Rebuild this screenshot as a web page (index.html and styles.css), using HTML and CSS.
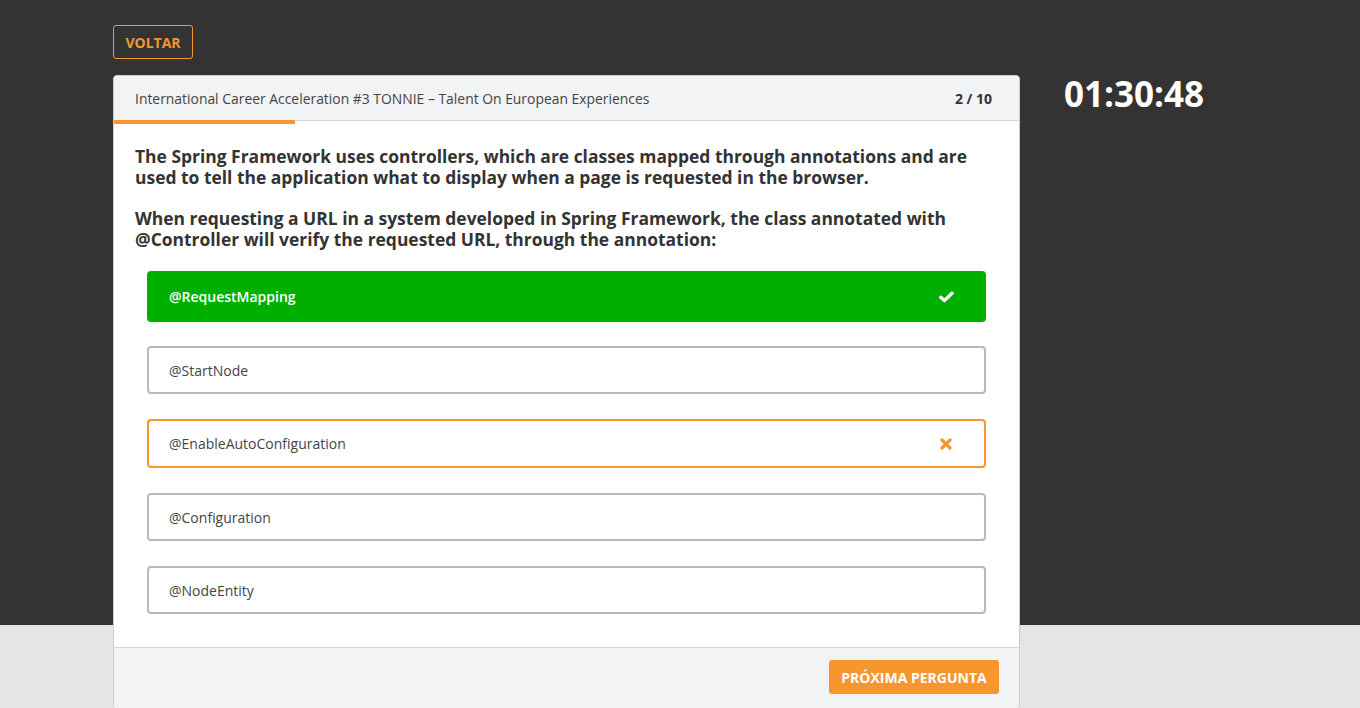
FILE: index.html
```html
<!DOCTYPE html>
<html lang="pt">
<head>
<meta charset="utf-8">
<title>Quiz</title>
<link rel="stylesheet" href="styles.css">
</head>
<body>
<div class="page">
  <div class="topbar">
    <button class="btn-back">VOLTAR</button>
  </div>
  <div class="row">
    <div class="card">
      <div class="card-header">
        <span class="title">International Career Acceleration #3 TONNIE – Talent On European Experiences</span>
        <span class="count">2 / 10</span>
      </div>
      <div class="progress"><div class="progress-fill" style="width:20%"></div></div>
      <div class="card-body">
        <p class="question">The Spring Framework uses controllers, which are classes mapped through annotations and are used to tell the application what to display when a page is requested in the browser.</p>
        <p class="question">When requesting a URL in a system developed in Spring Framework, the class annotated with @Controller will verify the requested URL, through the annotation:</p>
        <div class="options">
          <div class="option correct"><span>@RequestMapping</span>
            <svg class="icon" width="15" height="12" viewBox="0 0 15 12"><path d="M1.8 6.3 L5.4 9.6 L13 2.2" fill="none" stroke="#fff" stroke-width="3.4" stroke-linecap="round" stroke-linejoin="round"/></svg>
          </div>
          <div class="option"><span>@StartNode</span></div>
          <div class="option wrong"><span>@EnableAutoConfiguration</span>
            <svg class="icon" width="12" height="12" viewBox="0 0 12 12"><path d="M2 2 L10 10 M10 2 L2 10" fill="none" stroke="#f7962f" stroke-width="3.2" stroke-linecap="round"/></svg>
          </div>
          <div class="option"><span>@Configuration</span></div>
          <div class="option"><span>@NodeEntity</span></div>
        </div>
      </div>
      <div class="card-footer">
        <button class="btn-next">PRÓXIMA PERGUNTA</button>
      </div>
    </div>
    <div class="timer">01:30:48</div>
  </div>
</div>
</body>
</html>
```
FILE: styles.css
```css
* { box-sizing: border-box; }
html, body { margin: 0; padding: 0; }
body {
  font-family: "Open Sans", "Liberation Sans", sans-serif;
  background: linear-gradient(#333333 0, #333333 625px, #e4e5e6 625px);
  min-height: 708px;
  color: #333;
}
.page {
  padding: 25px 0 0 113px;
}
.topbar {
  height: 50px;
}
.btn-back {
  font-family: inherit;
  font-weight: 700;
  font-size: 14px;
  color: #f7962f;
  background: transparent;
  border: 1px solid #f7962f;
  border-radius: 3px;
  width: 80px;
  height: 34px;
  padding: 0;
  cursor: pointer;
}
.row {
  display: flex;
  align-items: flex-start;
  gap: 44px;
}
.card {
  width: 907px;
  background: #fff;
  border: 1px solid #c9cbce;
  border-radius: 4px;
  overflow: hidden;
}
.card-header {
  height: 45px;
  background: #f2f3f5;
  border-bottom: 1px solid #d4d6d9;
  display: flex;
  align-items: center;
  justify-content: space-between;
  padding: 0 27px 0 21px;
  font-size: 14px;
  color: #444;
}
.title { font-size: 13.9px; }
.count {
  font-weight: 700;
  color: #333;
}
.progress {
  height: 4px;
  margin-top: -1px;
}
.progress-fill {
  height: 4px;
  background: #f7962f;
}
.card-body {
  padding: 22px 33px 33px 21px;
}
.question {
  margin: 0 0 20px;
  font-size: 17.45px;
  font-weight: 700;
  line-height: 21px;
  color: #333;
}
.question + .question { margin-bottom: 21px; }
.options {
  padding-left: 12px;
  display: flex;
  flex-direction: column;
  gap: 25px;
}
.option {
  height: 48px;
  border: 2px solid #b6babe;
  border-radius: 4px;
  display: flex;
  align-items: center;
  justify-content: space-between;
  padding: 0 32px 0 20px;
  font-size: 14px;
  color: #444;
}
.option.correct {
  height: 51px;
  background: #00b000;
  border-color: #00b000;
  color: #fff;
  font-weight: 600;
  margin-bottom: -1px;
  padding-right: 30px;
}
.option.wrong {
  height: 49px;
  border-color: #f7962f;
}
.icon { display: block; }
.card-footer {
  height: 61px;
  background: #f2f3f5;
  border-top: 1px solid #d4d6d9;
  display: flex;
  align-items: flex-start;
  justify-content: flex-end;
  padding: 12px 20px 0 0;
}
.btn-next {
  font-family: inherit;
  font-weight: 700;
  font-size: 14px;
  color: #fff;
  background: #f7962f;
  border: none;
  border-radius: 3px;
  width: 170px;
  height: 34px;
  padding: 0;
  cursor: pointer;
}
.timer {
  color: #fff;
  font-size: 35px;
  font-weight: 700;
  line-height: 36px;
  margin-top: 1px;
}
```
